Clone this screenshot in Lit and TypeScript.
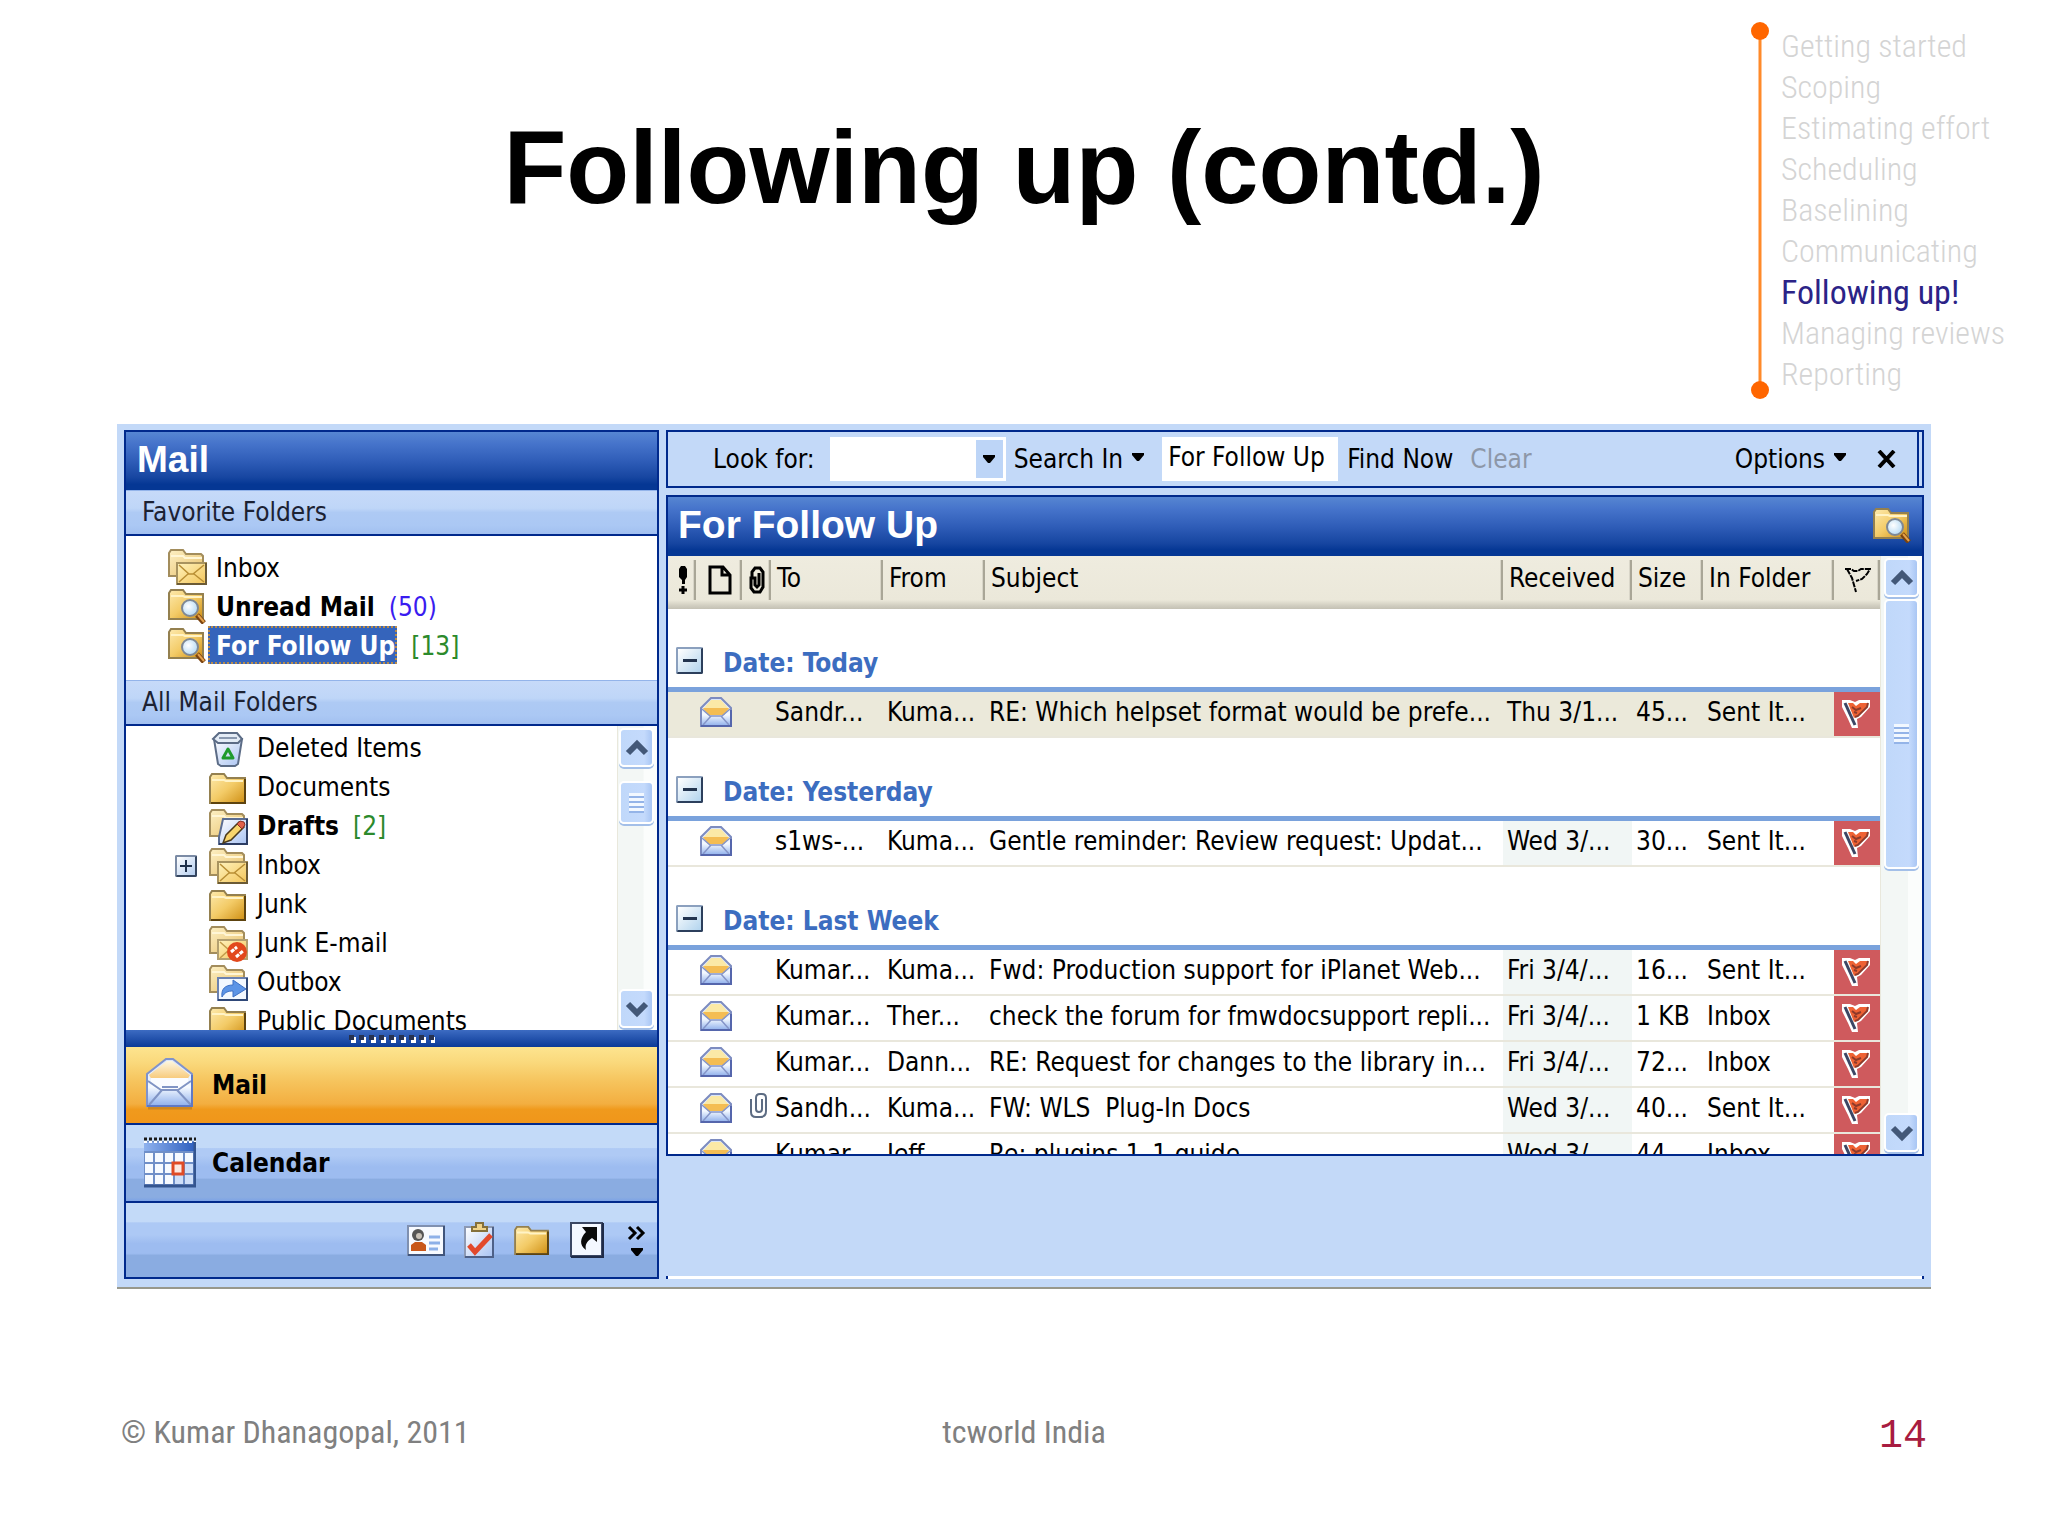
import { LitElement, html, svg, css, nothing, TemplateResult } from "lit";
import { customElement } from "lit/decorators.js";
import { classMap } from "lit/directives/class-map.js";

interface Message {
  to: string;
  from: string;
  subject: string;
  received: string;
  size: string;
  folder: string;
  attachment?: boolean;
  selected?: boolean;
}

interface Group {
  label: string;
  messages: Message[];
}

interface Folder {
  icon: string;
  name: string;
  count?: string;
  countClass?: string;
  bold?: boolean;
  selected?: boolean;
  expandable?: boolean;
}

const STEPS = [
  "Getting started",
  "Scoping",
  "Estimating effort",
  "Scheduling",
  "Baselining",
  "Communicating",
  "Following up!",
  "Managing reviews",
  "Reporting",
];
const CURRENT_STEP = 6;

const FAVORITES: Folder[] = [
  { icon: "inbox", name: "Inbox" },
  { icon: "search", name: "Unread Mail", bold: true, count: "(50)", countClass: "unread" },
  { icon: "search", name: "For Follow Up", bold: true, selected: true, count: "[13]", countClass: "total" },
];

const FOLDERS: Folder[] = [
  { icon: "trash", name: "Deleted Items" },
  { icon: "folder", name: "Documents" },
  { icon: "drafts", name: "Drafts", bold: true, count: "[2]", countClass: "total" },
  { icon: "inbox", name: "Inbox", expandable: true },
  { icon: "folder", name: "Junk" },
  { icon: "junk", name: "Junk E-mail" },
  { icon: "outbox", name: "Outbox" },
  { icon: "folder", name: "Public Documents" },
];

const GROUPS: Group[] = [
  {
    label: "Date: Today",
    messages: [
      { to: "Sandr...", from: "Kuma...", subject: "RE: Which helpset format would be prefe...", received: "Thu 3/1...", size: "45...", folder: "Sent It...", selected: true },
    ],
  },
  {
    label: "Date: Yesterday",
    messages: [
      { to: "s1ws-...", from: "Kuma...", subject: "Gentle reminder: Review request: Updat...", received: "Wed 3/...", size: "30...", folder: "Sent It..." },
    ],
  },
  {
    label: "Date: Last Week",
    messages: [
      { to: "Kumar...", from: "Kuma...", subject: "Fwd: Production support for iPlanet Web...", received: "Fri 3/4/...", size: "16...", folder: "Sent It..." },
      { to: "Kumar...", from: "Ther...", subject: "check the forum for fmwdocsupport repli...", received: "Fri 3/4/...", size: "1 KB", folder: "Inbox" },
      { to: "Kumar...", from: "Dann...", subject: "RE: Request for changes to the library in...", received: "Fri 3/4/...", size: "72...", folder: "Inbox" },
      { to: "Sandh...", from: "Kuma...", subject: "FW: WLS  Plug-In Docs", received: "Wed 3/...", size: "40...", folder: "Sent It...", attachment: true },
      { to: "Kumar...", from: "Jeff ...", subject: "Re: plugins 1_1 guide", received: "Wed 3/...", size: "44...", folder: "Inbox" },
    ],
  },
];

/* Gradients shared by every icon in the component. */
const gradients = html`<svg class="defs" width="0" height="0" aria-hidden="true">
  <defs>
    <linearGradient id="gold" x1="0" y1="0" x2="1" y2="1">
      <stop offset="0" stop-color="#fdeaae" /><stop offset=".5" stop-color="#f3cb67" /><stop offset="1" stop-color="#cf8f14" />
    </linearGradient>
    <linearGradient id="pale" x1="0" y1="0" x2="1" y2="1">
      <stop offset="0" stop-color="#fdf0c4" /><stop offset="1" stop-color="#e8c06a" />
    </linearGradient>
    <linearGradient id="letter" x1="0" y1="0" x2="1" y2="1">
      <stop offset="0" stop-color="#fff3bd" /><stop offset="1" stop-color="#f3c55a" />
    </linearGradient>
    <linearGradient id="sky" x1="0" y1="0" x2="1" y2="1">
      <stop offset="0" stop-color="#ffffff" /><stop offset="1" stop-color="#a9c3f2" />
    </linearGradient>
    <linearGradient id="sheet" x1="0" y1="0" x2="0" y2="1">
      <stop offset="0" stop-color="#d7e4fb" /><stop offset=".6" stop-color="#f4f9ff" /><stop offset="1" stop-color="#8fb0ec" />
    </linearGradient>
    <linearGradient id="flap" x1="0" y1="0" x2="0" y2="1">
      <stop offset="0" stop-color="#fdf7e0" /><stop offset="1" stop-color="#f5b44a" />
    </linearGradient>
    <linearGradient id="calhead" x1="0" y1="0" x2="1" y2="0">
      <stop offset="0" stop-color="#8fb2ee" /><stop offset="1" stop-color="#2e5fbe" />
    </linearGradient>
    <radialGradient id="glass" cx=".4" cy=".4" r=".6">
      <stop offset="0" stop-color="#ffffff" /><stop offset="1" stop-color="#b9dcf5" />
    </radialGradient>
  </defs>
</svg>`;

const backFolder = svg`
  <path d="M1 27V4l2-3h12l3 4h15l2 2v20z" fill="url(#pale)" stroke="#a38d5c" stroke-width="2" />
  <path d="M3 7h12l2 2h17" fill="none" stroke="#fff6d6" stroke-width="2" />`;

const folderArt: Record<string, unknown> = {
  folder: svg`
    <path d="M1 33V7l2-3h12l3 4h18v25z" fill="url(#gold)" stroke="#94804f" stroke-width="2" />
    <path d="M3 10h12l2 1h17" fill="none" stroke="#fff3c6" stroke-width="2" />
    <path d="M36 9v24H2" fill="none" stroke="#5d430f" stroke-width="2" />`,
  inbox: svg`${backFolder}
    <path d="M9 14h29v21H9z" fill="url(#letter)" stroke="#a8935f" stroke-width="2" />
    <path d="M11 16l10 9h4l11-9M11 33l9-8M36 33l-10-8" fill="none" stroke="#b98e34" stroke-width="1.5" />
    <path d="M38 14v21H9" fill="none" stroke="#6b5a35" stroke-width="2" />`,
  search: svg`
    <path d="M1 31V5l2-3h12l3 4h17v25z" fill="url(#gold)" stroke="#94804f" stroke-width="2" />
    <path d="M3 8h12l2 1h17" fill="none" stroke="#fff3c6" stroke-width="2" />
    <path d="M29 27l7 8" stroke="#7a4310" stroke-width="5" />
    <path d="M30 27l6 7" stroke="#e6a24a" stroke-width="2" />
    <circle cx="22" cy="20" r="8" fill="url(#glass)" stroke="#7f8894" stroke-width="2" />`,
  drafts: svg`${backFolder}
    <path d="M14 10h24v25H10V28z" fill="url(#sky)" stroke="#5b6d92" stroke-width="2" />
    <path d="M38 10v25H10" fill="none" stroke="#2d3d63" stroke-width="2" />
    <path d="M14 34l3-8 13-13 5 5-13 13z" fill="#f8d56c" stroke="#4b3a1a" stroke-width="1.5" />
    <path d="M28 15l3-3 4 1 1 3-3 4z" fill="#e0604a" stroke="#8a3023" />`,
  junk: svg`${backFolder}
    <path d="M9 14h29v19H9z" fill="url(#letter)" stroke="#b3a070" stroke-width="2" />
    <path d="M11 16l9 8-9 8" fill="none" stroke="#c29c4a" stroke-width="1.5" />
    <circle cx="28" cy="26" r="10" fill="#e2481c" />
    <path d="M22 26l6-5M27 31l7-6" stroke="#fff" stroke-width="3" stroke-dasharray="4 1" />`,
  outbox: svg`${backFolder}
    <path d="M9 13h29v22H9z" fill="#f3f8ff" stroke="#6c82b0" stroke-width="2" />
    <path d="M13 32c-1-8 3-12 11-12v-5l13 9-13 8v-6c-5 0-8 1-11 6z" fill="#5c94e6" stroke="#3c6fc4" />
    <path d="M38 13v22H9" fill="none" stroke="#2f4878" stroke-width="2" />`,
  trash: svg`
    <path d="M5 8h28l-4 25-3 2H12l-3-2z" fill="url(#sky)" stroke="#5c6c86" stroke-width="2" />
    <path d="M10 2h18l5 6-4 4H9L4 8z" fill="#e4ecf6" stroke="#5c6c86" stroke-width="2" />
    <path d="M10 7h18" stroke="#8a99b0" stroke-width="2" />
    <path d="M19 18l5 9H14z" fill="none" stroke="#1f9a2c" stroke-width="3" stroke-linejoin="round" />`,
};

const folderIcon = (name: string) =>
  html`<svg class="icon" width="39" height="36" viewBox="0 0 39 36" aria-hidden="true">${folderArt[name]}</svg>`;

const down = html`<svg class="arrow" width="12" height="8" viewBox="0 0 12 8" aria-hidden="true"><path d="M0 0h12v2L7 8H5L0 2z" fill="#000" /></svg>`;

const envelope = html`<svg width="32" height="30" viewBox="0 0 32 30" aria-hidden="true">
  <path d="M1 29V11L11 1h10l10 10v18z" fill="url(#sheet)" stroke="#7d8cc0" stroke-width="2" />
  <path d="M3 12L11 3h10l8 9-5 6H8z" fill="#fbe9a6" />
  <path d="M3 11h26l-5 7H8z" fill="#f4bd53" />
  <path d="M2 12l8 7h12l8-7M3 28l8-9M29 28l-8-9" fill="none" stroke="#8595c8" stroke-width="1.5" />
  <path d="M31 13v16H1" fill="none" stroke="#5566ac" stroke-width="2" />
</svg>`;

const clip = html`<svg width="19" height="25" viewBox="0 0 19 25" aria-hidden="true">
  <path d="M2 6v13q0 5 5 5h4q6 0 6-6V5q0-4-4-4h-2q-4 0-4 4v11q0 3 3 3t3-3V6" fill="none" stroke="#5d6c83" stroke-width="2" />
</svg>`;

const redFlag = html`<svg width="30" height="30" viewBox="0 0 30 30" aria-hidden="true">
  <path d="M1 1h8l5 2 4-2h11v7l-9 10-4 2 1 9h-6L7 20 1 8z" fill="#fff" />
  <path d="M7 4h5l3 3 4-3h7v3l-9 10-4 2z" fill="#ee6234" />
  <path d="M27 4l-1 4-9 9-3 1M11 8l4 3 5-2M13 13l3 1" fill="none" stroke="#8e3a2a" stroke-width="2" />
  <path d="M4 4l5 11 5 11" fill="none" stroke="#3c4664" stroke-width="3" />
</svg>`;

const chevron = (up: boolean) => html`<svg width="24" height="18" viewBox="0 0 24 18" aria-hidden="true">
  <path d=${up ? "M3 14l9-9 9 9" : "M3 4l9 9 9-9"} fill="none" stroke="#435878" stroke-width="6" />
</svg>`;

const scrollbar = (kind: string) => html`<div class="scroll ${kind}">
  <button class="key" aria-label="Scroll up">${chevron(true)}</button>
  <div class="thumb"><span class="grip"></span></div>
  <button class="key end" aria-label="Scroll down">${chevron(false)}</button>
</div>`;

@customElement("app-root")
export class AppRoot extends LitElement {
  static styles = css`
    :host {
      display: block;
      min-height: 100vh;
      box-sizing: border-box;
      background: #fff;
      color: #000;
      --navy: #00298c;
      --pane: #c3d9f8;
      --ui: "DejaVu Sans Condensed", "DejaVu Sans", sans-serif;
      --narrow: "Roboto Condensed", Roboto, sans-serif;
    }
    * { box-sizing: border-box; }
    button, input {
      font: inherit;
      color: inherit;
      border: 0;
      padding: 0;
      margin: 0;
      background: none;
      border-radius: 0;
    }
    a { color: inherit; text-decoration: none; }
    svg { display: block; flex: none; }
    ul, ol { list-style: none; margin: 0; padding: 0; }
    .defs { position: absolute; }

    .top {
      display: grid;
      grid-template-columns: 1fr auto 1fr;
      height: 424px;
    }
    h1 {
      grid-column: 2;
      margin: 0;
      padding-top: 110px;
      font: bold 103px/116px "Liberation Sans", sans-serif;
      white-space: nowrap;
    }
    .outline {
      justify-self: end;
      align-self: start;
      display: flex;
      gap: 12px;
      width: 297px;
      margin-top: 22px;
    }
    .rail { width: 18px; }
    .steps {
      padding-top: 4px;
      font: 300 32px/41px var(--narrow);
      color: #d4d4d4;
      white-space: nowrap;
    }
    .steps .current { font-size: 34px; font-weight: 400; color: #2b2387; }

    .window {
      display: flex;
      gap: 7px;
      margin: 0 117px;
      padding: 6px 7px 8px;
      background: var(--pane);
      border-bottom: 2px solid #98988c;
      font: 26px/39px var(--ui);
      white-space: nowrap;
    }

    .nav {
      flex: none;
      width: 535px;
      border: 2px solid var(--navy);
      background: #fff;
    }
    .title {
      display: flex;
      align-items: center;
      justify-content: space-between;
      margin: 0;
      background: linear-gradient(#5686d2, #4674cb 20%, #2f5db8 50%, #1746a1 78%, #053794 90%, #053794);
      color: #fff;
      font-family: "Liberation Sans", sans-serif;
      font-weight: bold;
      line-height: 54px;
    }
    .nav .title { height: 58px; padding: 0 0 2px 11px; font-size: 37px; }
    .section {
      margin: 0;
      height: 46px;
      padding-left: 16px;
      border-top: 1px solid #93b4ea;
      border-bottom: 2px solid var(--navy);
      background: linear-gradient(#c6daf9, #bfd6f8 40%, #aecaf4 50%, #abc8f4 80%, #a2c0f0);
      font: 26px/43px var(--ui);
      color: #1c2233;
    }
    .favorites { height: 144px; padding: 11px 0 0 42px; }
    .folder { display: flex; align-items: center; height: 39px; }
    .folder .label { padding: 0 0 0 8px; margin-left: 1px; }
    .favorites .label, .favorites .count { padding-top: 3px; line-height: 35px; }
    .bold { font-weight: bold; }
    .selected-label {
      background: #3564bb;
      color: #fff;
      outline: 2px dotted #b98c4a;
      outline-offset: -2px;
    }
    .folder .selected-label { padding-right: 2px; }
    .count { margin-left: 14px; }
    .unread { color: #3a1cf0; }
    .total { color: #2c8a2c; }

    .tree { display: flex; height: 304px; overflow: hidden; }
    .tree ul { flex: 1; padding: 3px 0 0 49px; }
    .toggle {
      flex: none;
      width: 22px;
      height: 22px;
      border: 2px solid #7b8ba5;
      border-right-color: #34455f;
      border-bottom-color: #34455f;
      border-radius: 2px;
      background: linear-gradient(135deg, #fff, #b4cdee);
      display: grid;
      place-items: center;
    }
    .twist { flex: none; width: 34px; }

    .scroll {
      flex: none;
      display: flex;
      flex-direction: column;
      align-items: center;
      width: 42px;
      padding: 2px 3px;
      border-left: 1px solid #e9e8dc;
      background: linear-gradient(90deg, #f3f7f5 65%, #fbfdfc 66%);
    }
    .tree-scroll { width: 40px; padding: 2px 3px 2px 1px; }
    .key, .thumb {
      flex: none;
      display: grid;
      place-items: center;
      width: 100%;
      height: 39px;
      border: 2px solid #fff;
      border-radius: 5px;
      background: linear-gradient(90deg, #c0d8fa, #c4dafc 75%, #a9c6f4);
      box-shadow: 0 2px 0 #a3bfe8;
    }
    .thumb { margin-top: 14px; height: 43px; }
    .list-scroll .thumb { margin-top: 2px; height: 270px; }
    .end { margin-top: auto; }
    .grip {
      width: 15px;
      height: 20px;
      background: repeating-linear-gradient(#f2f8ff 0 3px, #94b4e8 3px 5px);
    }

    .splitter {
      display: grid;
      place-items: center;
      height: 17px;
      background: linear-gradient(#3c6bc2, #0b3a97);
    }
    .module {
      display: flex;
      align-items: center;
      width: 100%;
      height: 78px;
      border-bottom: 2px solid var(--navy);
      font-weight: bold;
      text-align: left;
      background: linear-gradient(#c3daf8 0 30%, #afcaf5 31% 40%, #9dbcf0 55% 70%, #8aace1 71% 95%, #7da3e6);
    }
    .module .art { display: grid; place-items: center; width: 86px; padding-bottom: 2px; }
    .module.active {
      background: linear-gradient(#fde48f, #fad97c 20%, #f6c45d 45%, #f3ae40 75%, #f09a1d 82%, #f0961a);
    }
    .shortcuts {
      display: flex;
      align-items: center;
      justify-content: flex-end;
      gap: 19px;
      height: 74px;
      padding-right: 10px;
      background: linear-gradient(#c3daf8 0 25%, #adc9f5 27% 43%, #9dbcf0 55% 68%, #8aace1 71%);
    }
    .shortcuts .more { margin-left: 4px; }

    .main { flex: 1; min-width: 0; display: flex; flex-direction: column; }
    .search {
      display: flex;
      align-items: center;
      height: 58px;
      margin-bottom: 7px;
      padding: 0 9px 0 45px;
      border: 2px solid var(--navy);
      box-shadow: inset -3px 0 0 var(--pane), inset -5px 0 0 var(--navy);
    }
    .search label { margin-right: 15px; }
    .combo {
      display: flex;
      width: 176px;
      height: 44px;
      padding: 3px;
      background: #fff;
    }
    .combo input { flex: 1; min-width: 0; }
    .combo button { display: grid; place-items: center; width: 27px; background: #bdd5f7; }
    .menu { display: flex; align-items: center; gap: 9px; margin-left: 8px; }
    .menu .arrow { margin-bottom: 4px; }
    .scope { width: 176px; height: 44px; margin: 0 9px 0 18px; padding: 0 0 4px 6px; background: #fff; }
    .clear { margin: 0 auto 0 17px; color: #8d97a8; }
    .close { margin: 0 16px 0 31px; }

    .list { border: 2px solid var(--navy); background: #fff; }
    .list .title { height: 59px; padding: 0 10px 4px 10px; font-size: 39px; }
    .view { display: flex; height: 598px; overflow: hidden; }
    .messages { flex: 1; min-width: 0; }
    table { width: 100%; border-collapse: separate; border-spacing: 0; table-layout: fixed; }
    th, td { padding: 0; text-align: left; font-weight: normal; overflow: hidden; }
    thead th {
      height: 53px;
      background: linear-gradient(#efecdf, #ebe8da 44px, #cfccbf 50px, #c4c1b4);
      vertical-align: top;
    }
    thead .cell {
      display: flex;
      align-items: center;
      height: 40px;
      margin-top: 4px;
      padding-left: 6px;
      line-height: 36px;
      border-right: 2px solid #a9a697;
      box-shadow: inset -1px 0 0 #d8d5c8;
    }
    thead .text .cell { padding-bottom: 4px; }
    thead .glyph .cell { justify-content: center; padding-left: 3px; }
    .c-flagmark { width: 28px; }
    .c-type { width: 46px; }
    .c-clip { width: 29px; }
    .c-to { width: 112px; }
    .c-from { width: 102px; }
    .c-received { width: 129px; }
    .c-size { width: 71px; }
    .c-folder { width: 131px; }
    .c-flag { width: 46px; }
    .group th { height: 83px; border-bottom: 5px solid #7aa2dc; vertical-align: bottom; }
    .group button {
      display: flex;
      align-items: center;
      gap: 20px;
      padding: 0 0 0 8px;
      margin-bottom: 4px;
      font-weight: bold;
      color: #3c6dc0;
    }
    .group .box {
      width: 27px;
      height: 27px;
      margin-bottom: 6px;
      border: 2px solid #8ba0be;
      border-right-color: #2c3f5c;
      border-bottom-color: #2c3f5c;
      border-radius: 2px;
      background: linear-gradient(135deg, #fff, #b2d4ee);
      display: grid;
      place-items: center;
    }
    .message td {
      height: 46px;
      padding-left: 4px;
      border-bottom: 2px solid #e9e7dc;
      line-height: 40px;
      vertical-align: top;
      white-space: pre;
    }
    .message .pic { padding: 5px 0 0 4px; }
    .message .clip { padding-left: 7px; }
    .message .received { background: #f1f6f5; }
    .message .flag { padding: 7px 0 0 7px; background: #cf5a5d; }
    .message.selected td { background: #ebe9da; }
    .message.selected .flag { background: #cf5a5d; }

    .dock {
      margin-top: auto;
      height: 3px;
      background: #fff;
      border: solid var(--navy);
      border-width: 0 2px;
    }

    footer {
      display: grid;
      grid-template-columns: 1fr auto 1fr;
      align-items: center;
      margin: 119px 117px 0;
      padding: 0 4px;
      font: 32px/41px var(--narrow);
      color: #808080;
    }
    .page { justify-self: end; padding-top: 8px; font: 40px/41px "Liberation Mono", monospace; color: #a81c40; }
  `;

  private folderRow(f: Folder, inTree: boolean): TemplateResult {
    return html`<li class="folder">
      ${inTree
        ? html`<span class="twist">${f.expandable
            ? html`<button class="toggle" aria-label="Expand ${f.name}">
                <svg width="14" height="14" viewBox="0 0 14 14"><path d="M7 1v12M1 7h12" stroke="#1d2f49" stroke-width="2" /></svg>
              </button>`
            : nothing}</span>`
        : nothing}
      ${folderIcon(f.icon)}
      <a href="#" class=${classMap({ label: true, bold: !!f.bold, "selected-label": !!f.selected })}>${f.name}</a>
      ${f.count ? html`<span class="count ${f.countClass ?? ""}">${f.count}</span>` : nothing}
    </li>`;
  }

  private messageRow(m: Message): TemplateResult {
    return html`<tr class=${classMap({ message: true, selected: !!m.selected })}>
      <td></td>
      <td class="pic">${envelope}</td>
      <td class="pic clip">${m.attachment ? clip : nothing}</td>
      <td>${m.to}</td>
      <td>${m.from}</td>
      <td>${m.subject}</td>
      <td class="received">${m.received}</td>
      <td>${m.size}</td>
      <td>${m.folder}</td>
      <td class="flag">${redFlag}</td>
    </tr>`;
  }

  private navPane(): TemplateResult {
    return html`<aside class="nav">
      <h2 class="title">Mail</h2>
      <h3 class="section">Favorite Folders</h3>
      <ul class="favorites">${FAVORITES.map((f) => this.folderRow(f, false))}</ul>
      <h3 class="section">All Mail Folders</h3>
      <div class="tree">
        <ul class="branches">${FOLDERS.map((f) => this.folderRow(f, true))}</ul>
        ${scrollbar("tree-scroll")}
      </div>
      <div class="splitter">
        <svg width="86" height="8" viewBox="0 0 86 8" aria-hidden="true">
          ${[0, 1, 2, 3, 4, 5, 6, 7, 8].map(
            (i) => svg`<g transform="translate(${i * 10} 0)"><path d="M2 2h5v6H2z" fill="#fff" /><path d="M0 0h5v5H0z" fill="#27324f" /></g>`
          )}
        </svg>
      </div>
      <button class="module active">
        <span class="art">
          <svg width="47" height="52" viewBox="0 0 47 52" aria-hidden="true">
            <path d="M2 50h44" stroke="#a8701c" stroke-opacity=".5" stroke-width="3" />
            <path d="M1 48V16L20 1h7l19 15v32z" fill="url(#sheet)" stroke="#7f93cc" stroke-width="2" />
            <path d="M3 17L21 3h5l18 14-7 12H10z" fill="url(#flap)" />
            <path d="M5 20h37v8l-10 5H15L5 28z" fill="#fafcff" />
            <path d="M2 23l13 9h17l13-9M3 47l13-15M45 47L31 32M16 29h16" fill="none" stroke="#8094c4" stroke-width="2" />
            <path d="M46 17v31H1" fill="none" stroke="#5f79c4" stroke-width="2" />
          </svg>
        </span>
        Mail
      </button>
      <button class="module">
        <span class="art">
          <svg width="53" height="52" viewBox="0 0 53 52" aria-hidden="true">
            <path d="M1 5h51v45H1z" fill="#6f8fc8" />
            <path d="M1 6h51v9H1z" fill="url(#calhead)" />
            <path d="M1 3h52" stroke="#1a1a1a" stroke-width="3" stroke-dasharray="3 2" />
            <path d="M1 6h52" stroke="#fff" stroke-width="2" stroke-dasharray="3 2" />
            ${[0, 1, 2, 3, 4].map((c) =>
              [0, 1, 2].map(
                (r) => svg`<rect x=${2 + c * 10} y=${17 + r * 11} width="8" height="9" fill=${c > 2 && r > 0 ? "#cfdff8" : "#f6faff"} />`
              )
            )}
            <rect x="30" y="27" width="10" height="11" fill="#fbe9e2" stroke="#df4a24" stroke-width="3" />
            <path d="M52 6v44H1" fill="none" stroke="#34558f" stroke-width="3" />
          </svg>
        </span>
        Calendar
      </button>
      <div class="shortcuts">
        <button aria-label="Contacts">
          <svg width="38" height="31" viewBox="0 0 38 31" aria-hidden="true">
            <path d="M1 1h36v29H1z" fill="#f7faff" stroke="#7f90b0" stroke-width="2" />
            <path d="M37 1v29H1" fill="none" stroke="#40557c" stroke-width="2" />
            <circle cx="11" cy="10" r="6" fill="#565656" /><circle cx="12" cy="11" r="3" fill="#c9c2b8" />
            <path d="M4 26v-6l4-3h7l4 3v6z" fill="#c8571a" />
            <path d="M22 12h11M22 18h11M22 24h9" stroke="#8db0e8" stroke-width="3" />
          </svg>
        </button>
        <button aria-label="Tasks">
          <svg width="30" height="36" viewBox="0 0 30 36" aria-hidden="true">
            <path d="M1 5h28v30H1z" fill="url(#sky)" stroke="#8c99b4" stroke-width="2" />
            <path d="M29 5v30H1" fill="none" stroke="#4e6188" stroke-width="2" />
            <path d="M8 9V5h4V1h7v4h4v4z" fill="#f1d387" stroke="#85703a" stroke-width="2" />
            <path d="M5 23l6 7 16-17" fill="none" stroke="#e2492c" stroke-width="5" />
          </svg>
        </button>
        <button aria-label="Folder List">
          <svg width="38" height="31" viewBox="0 2 38 33" aria-hidden="true">${folderArt.folder}</svg>
        </button>
        <button aria-label="Shortcuts">
          <svg width="34" height="36" viewBox="0 0 34 36" aria-hidden="true">
            <path d="M1 1h31v33H1z" fill="#f4f8ff" stroke="#3b4763" stroke-width="2" />
            <path d="M33 1v34H1" fill="none" stroke="#1f2b48" stroke-width="2" />
            <path d="M12 5h15v15l-5-4c-6 4-7 7-6 12-7-5-6-12 0-18z" fill="#0a0a0a" />
          </svg>
        </button>
        <button class="more" aria-label="Configure buttons">
          <svg width="20" height="34" viewBox="0 0 20 34" aria-hidden="true">
            <path d="M2 4l6 6-6 6M10 4l6 6-6 6" fill="none" stroke="#000" stroke-width="3" />
            <path d="M4 25h12v2l-5 6H9l-5-6z" fill="#000" />
          </svg>
        </button>
      </div>
    </aside>`;
  }

  private listPane(): TemplateResult {
    const text = (label: string) => html`<th class="text" scope="col"><div class="cell">${label}</div></th>`;
    return html`<main class="main">
      <form class="search" @submit=${(e: Event) => e.preventDefault()}>
        <label for="look">Look for:</label>
        <span class="combo">
          <input id="look" type="text" />
          <button type="button" aria-label="Recent searches">${down}</button>
        </span>
        <button type="button" class="menu">Search In ${down}</button>
        <input class="scope" type="text" aria-label="Search scope" value="For Follow Up" />
        <button type="submit">Find Now</button>
        <button type="button" class="clear">Clear</button>
        <button type="button" class="menu">Options ${down}</button>
        <button type="button" class="close" aria-label="Close">
          <svg width="20" height="18" viewBox="0 0 20 18" aria-hidden="true"><path d="M2 1l15 16M17 1L2 17" stroke="#000" stroke-width="4" /></svg>
        </button>
      </form>
      <section class="list">
        <h2 class="title">For Follow Up ${folderIcon("search")}</h2>
        <div class="view">
          <div class="messages">
            <table>
              <colgroup>
                <col class="c-flagmark" /><col class="c-type" /><col class="c-clip" /><col class="c-to" />
                <col class="c-from" /><col /><col class="c-received" /><col class="c-size" />
                <col class="c-folder" /><col class="c-flag" />
              </colgroup>
              <thead>
                <tr>
                  <th class="glyph" scope="col" aria-label="Importance"><div class="cell">
                    <svg width="10" height="28" viewBox="0 0 10 28"><path d="M3 0h4l2 3v8l-2 3v4H4v-4L1 11V3z" /><path d="M5 20v8M1 24h8" stroke="#000" stroke-width="3" /></svg>
                  </div></th>
                  <th class="glyph" scope="col" aria-label="Item type"><div class="cell">
                    <svg width="24" height="30" viewBox="0 0 24 30"><path d="M2 2h13l7 8v18H2zM14 2v8h8" fill="none" stroke="#000" stroke-width="3" /></svg>
                  </div></th>
                  <th class="glyph" scope="col" aria-label="Attachment"><div class="cell">
                    <svg width="16" height="28" viewBox="0 0 16 28"><path d="M3 12V6l3-4h5l3 4v15l-3 5H5l-3-4V12h4v7l2 2 2-2V7" fill="none" stroke="#000" stroke-width="3" /></svg>
                  </div></th>
                  ${["To", "From", "Subject", "Received", "Size", "In Folder"].map(text)}
                  <th class="glyph" scope="col" aria-label="Flag"><div class="cell">
                    <svg width="26" height="26" viewBox="0 0 26 26"><path d="M0 2h6l3 2h4l3-2h9l-3 5-5 5-6 2M2 2l5 9 4 14" fill="none" stroke="#000" stroke-width="2" stroke-dasharray="6 1" /></svg>
                  </div></th>
                </tr>
              </thead>
              <tbody>
                ${GROUPS.map(
                  (g) => html`<tr class="group">
                      <th colspan="10" scope="rowgroup">
                        <button>
                          <span class="box"><svg width="14" height="3" viewBox="0 0 14 3"><path d="M0 0h14v3H0z" fill="#22344f" /></svg></span>${g.label}
                        </button>
                      </th>
                    </tr>
                    ${g.messages.map((m) => this.messageRow(m))}`
                )}
              </tbody>
            </table>
          </div>
          ${scrollbar("list-scroll")}
        </div>
      </section>
      <div class="dock"></div>
    </main>`;
  }

  render() {
    return html`${gradients}
      <header class="top">
        <h1>Following up (contd.)</h1>
        <nav class="outline" aria-label="Outline">
          <svg class="rail" width="18" height="378" viewBox="0 0 18 378" aria-hidden="true">
            <path d="M9 9v360" stroke="#ff8a2a" stroke-width="3" />
            <circle cx="9" cy="9" r="9" fill="#ff6600" /><circle cx="9" cy="368" r="9" fill="#ff6600" />
          </svg>
          <ol class="steps">
            ${STEPS.map((s, i) => html`<li class=${classMap({ current: i === CURRENT_STEP })}><a href="#">${s}</a></li>`)}
          </ol>
        </nav>
      </header>
      <div class="window">${this.navPane()}${this.listPane()}</div>
      <footer>
        <span>© Kumar Dhanagopal, 2011</span>
        <span>tcworld India</span>
        <span class="page">14</span>
      </footer>`;
  }
}
